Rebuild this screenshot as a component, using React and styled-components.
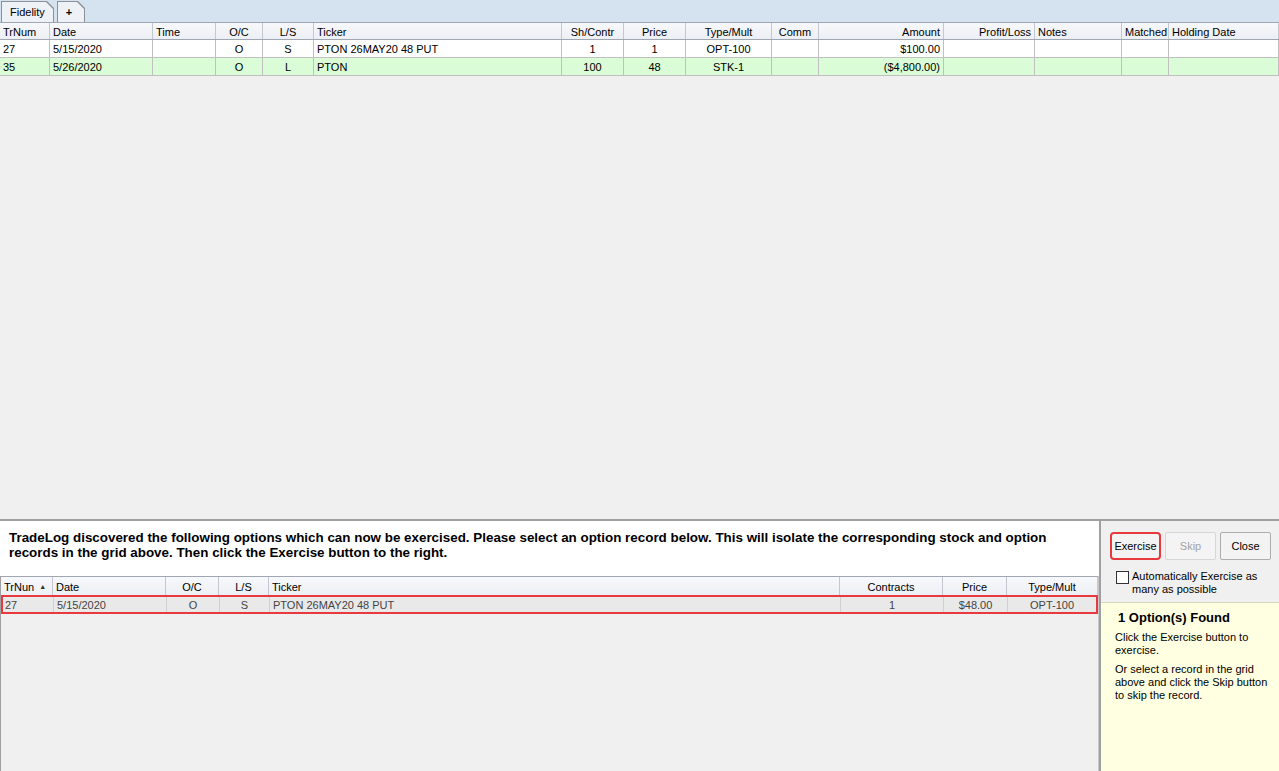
import React from "react";
import styled, { createGlobalStyle } from "styled-components";

const GlobalStyle = createGlobalStyle`
  html, body {
    margin: 0;
    padding: 0;
    background: #f0f0f0;
  }
  body {
    font-family: "Liberation Sans", Arial, sans-serif;
    font-size: 11px;
    color: #000;
  }
`;

const Page = styled.div`
  width: 1279px;
  height: 771px;
  display: flex;
  flex-direction: column;
  overflow: hidden;
`;

const TopPane = styled.div`
  height: 519px;
  display: flex;
  flex-direction: column;
  border-bottom: 2px solid #a0a0a0;
  background: #f0f0f0;
`;

const TabStrip = styled.div`
  height: 22px;
  background: #d5e3f1;
  display: flex;
  align-items: flex-end;
  gap: 3px;
  padding-left: 1px;
  box-sizing: border-box;
`;

const TabOuter = styled.div`
  height: 21px;
  width: ${(p) => p.w}px;
  background: #8d9096;
  padding: 1px 1px 0 1px;
  box-sizing: border-box;
  clip-path: polygon(0 0, calc(100% - 7px) 0, 100% 7px, 100% 100%, 0 100%);
`;

const TabInner = styled.div`
  height: 100%;
  background: #eef1f6;
  clip-path: polygon(0 0, calc(100% - 7px) 0, 100% 7px, 100% 100%, 0 100%);
  display: flex;
  align-items: center;
  justify-content: ${(p) => (p.center ? "center" : "flex-start")};
  padding-left: ${(p) => (p.center ? "0" : "8px")};
  padding-right: ${(p) => (p.center ? "4px" : "0")};
  font-weight: ${(p) => (p.bold ? "bold" : "normal")};
  font-size: 11px;
`;

const Row = styled.div`
  display: grid;
  grid-template-columns: ${(p) => p.cols};
  height: ${(p) => p.h}px;
  background: ${(p) => p.bg};
  color: ${(p) => p.fg || "#000"};
  border-bottom: 1px solid ${(p) => p.line};
  box-sizing: border-box;
`;

const HeaderRow = styled(Row)`
  background: linear-gradient(#f7f8fb, #eceff4);
  border-top: 1px solid ${(p) => p.topLine || "transparent"};
`;

const Cell = styled.div`
  display: flex;
  align-items: center;
  justify-content: ${(p) =>
    p.align === "center" ? "center" : p.align === "right" ? "flex-end" : "flex-start"};
  padding: 1px 3px 0 3px;
  border-right: 1px solid ${(p) => p.line};
  white-space: nowrap;
  overflow: hidden;
  gap: 5px;
`;

const Filler = styled.div`
  flex: 1;
  background: #f0f0f0;
`;

const BottomPane = styled.div`
  flex: 1;
  display: flex;
`;

const LeftPane = styled.div`
  flex: 1;
  display: flex;
  flex-direction: column;
`;

const Message = styled.div`
  height: 55px;
  background: #fff;
  padding: 9px 0 0 9px;
  box-sizing: border-box;
  font-size: 13.4px;
  font-weight: bold;
  line-height: 15px;
`;

const MessageText = styled.div`
  max-width: 1045px;
`;

const SubGrid = styled.div`
  flex: 1;
  display: flex;
  flex-direction: column;
  border-left: 1px solid #a0a0a0;
  border-right: 1px solid #c8c8c8;
  background: #f0f0f0;
`;

const Highlight = styled.div`
  margin: 0 1px 0 1px;
  outline: 2px solid #e8393f;
  outline-offset: -1px;
`;

const SortArrow = styled.span`
  font-size: 7px;
  color: #333;
`;

const SidePanel = styled.div`
  width: 178px;
  border-left: 2px solid #a0a0a0;
  display: flex;
  flex-direction: column;
`;

const Controls = styled.div`
  height: 81px;
  background: #f0f0f0;
  padding: 11px 0 0 9px;
  box-sizing: border-box;
`;

const Buttons = styled.div`
  display: flex;
  gap: 4px;
`;

const Button = styled.button`
  width: 51px;
  height: 28px;
  font-family: "Liberation Sans", Arial, sans-serif;
  font-size: 11px;
  color: ${(p) => (p.disabled ? "#a3a3a3" : "#000")};
  background: ${(p) => (p.disabled ? "#f4f4f4" : "#f3f3f3")};
  border: ${(p) =>
    p.marked ? "2px solid #e8393f" : p.disabled ? "1px solid #d6d6d6" : "1px solid #adadad"};
  border-radius: ${(p) => (p.marked ? "4px" : "2px")};
  padding: 0;
  cursor: pointer;
`;

const CheckLine = styled.label`
  display: flex;
  gap: 3px;
  margin-top: 10px;
  margin-left: 6px;
  font-size: 11px;
  line-height: 13px;
`;

const Box = styled.span`
  width: 11px;
  height: 11px;
  border: 1px solid #333;
  background: #fff;
  flex-shrink: 0;
  margin-top: 1px;
`;

const Info = styled.div`
  flex: 1;
  background: #ffffe1;
  border-top: 1px solid #d8d8c0;
  padding: 7px 8px 0 14px;
  box-sizing: border-box;
`;

const InfoTitle = styled.div`
  font-size: 13px;
  font-weight: bold;
  margin-left: 3px;
  margin-bottom: 6px;
`;

const InfoText = styled.p`
  margin: 0 0 6px 0;
  font-size: 11px;
  line-height: 13px;
`;

const topCols = [
  ["TrNum", 50, "left"],
  ["Date", 103, "left"],
  ["Time", 63, "left"],
  ["O/C", 47, "center"],
  ["L/S", 51, "center"],
  ["Ticker", 248, "left"],
  ["Sh/Contr", 62, "center"],
  ["Price", 62, "center"],
  ["Type/Mult", 86, "center"],
  ["Comm", 47, "center"],
  ["Amount", 125, "right"],
  ["Profit/Loss", 91, "right"],
  ["Notes", 87, "left"],
  ["Matched", 47, "left"],
  ["Holding Date", 110, "left"],
];

const topRows = [
  {
    bg: "#fff",
    cells: ["27", "5/15/2020", "", "O", "S", "PTON 26MAY20 48 PUT", "1", "1", "OPT-100", "", "$100.00", "", "", "", ""],
  },
  {
    bg: "#dafcd6",
    cells: ["35", "5/26/2020", "", "O", "L", "PTON", "100", "48", "STK-1", "", "($4,800.00)", "", "", "", ""],
  },
];

const subCols = [
  ["TrNun", 52, "left"],
  ["Date", 113, "left"],
  ["O/C", 53, "center"],
  ["L/S", 50, "center"],
  ["Ticker", 571, "left"],
  ["Contracts", 103, "center"],
  ["Price", 64, "center"],
  ["Type/Mult", 1, "center"],
];

const subRow = ["27", "5/15/2020", "O", "S", "PTON 26MAY20 48 PUT", "1", "$48.00", "OPT-100"];

const colTemplate = (cols) =>
  cols.map((c, i) => (i === cols.length - 1 ? "1fr" : `${c[1]}px`)).join(" ");

export default function App() {
  const topTpl = colTemplate(topCols);
  const subTpl = colTemplate(subCols);
  return (
    <Page>
      <GlobalStyle />
      <TopPane>
        <TabStrip>
          <TabOuter w={53}>
            <TabInner>Fidelity</TabInner>
          </TabOuter>
          <TabOuter w={28}>
            <TabInner center bold>+</TabInner>
          </TabOuter>
        </TabStrip>
        <HeaderRow cols={topTpl} h={18} line="#a0a7b2" topLine="#a0a7b2">
          {topCols.map(([name, , align]) => (
            <Cell key={name} align={align} line="#c3c8d0">
              {name}
            </Cell>
          ))}
        </HeaderRow>
        {topRows.map((r, ri) => (
          <Row key={ri} cols={topTpl} h={18} bg={r.bg} line="#c0c0c0">
            {r.cells.map((v, i) => (
              <Cell key={i} align={topCols[i][2]} line="#c0c0c0">
                {v}
              </Cell>
            ))}
          </Row>
        ))}
        <Filler />
      </TopPane>
      <BottomPane>
        <LeftPane>
          <Message>
            <MessageText>
              TradeLog discovered the following options which can now be exercised. Please select an
              option record below. This will isolate the corresponding stock and option records in the
              grid above. Then click the Exercise button to the right.
            </MessageText>
          </Message>
          <SubGrid>
            <HeaderRow cols={subTpl} h={20} line="#c0c0c0" topLine="#a0a7b2">
              {subCols.map(([name, , align], i) => (
                <Cell key={name} align={align} line="#c3c8d0">
                  {name}
                  {i === 0 && <SortArrow>▲</SortArrow>}
                </Cell>
              ))}
            </HeaderRow>
            <Highlight>
              <Row cols={subTpl} h={17} bg="#e9e9e9" fg="#444" line="#d0d0d0">
                {subRow.map((v, i) => (
                  <Cell key={i} align={subCols[i][2]} line="#d0d0d0">
                    {v}
                  </Cell>
                ))}
              </Row>
            </Highlight>
          </SubGrid>
        </LeftPane>
        <SidePanel>
          <Controls>
            <Buttons>
              <Button marked>Exercise</Button>
              <Button disabled>Skip</Button>
              <Button>Close</Button>
            </Buttons>
            <CheckLine>
              <Box />
              <span>
                Automatically Exercise as
                <br />
                many as possible
              </span>
            </CheckLine>
          </Controls>
          <Info>
            <InfoTitle>1 Option(s) Found</InfoTitle>
            <InfoText>
              Click the Exercise button to
              <br />
              exercise.
            </InfoText>
            <InfoText>
              Or select a record in the grid
              <br />
              above and click the Skip button
              <br />
              to skip the record.
            </InfoText>
          </Info>
        </SidePanel>
      </BottomPane>
    </Page>
  );
}
